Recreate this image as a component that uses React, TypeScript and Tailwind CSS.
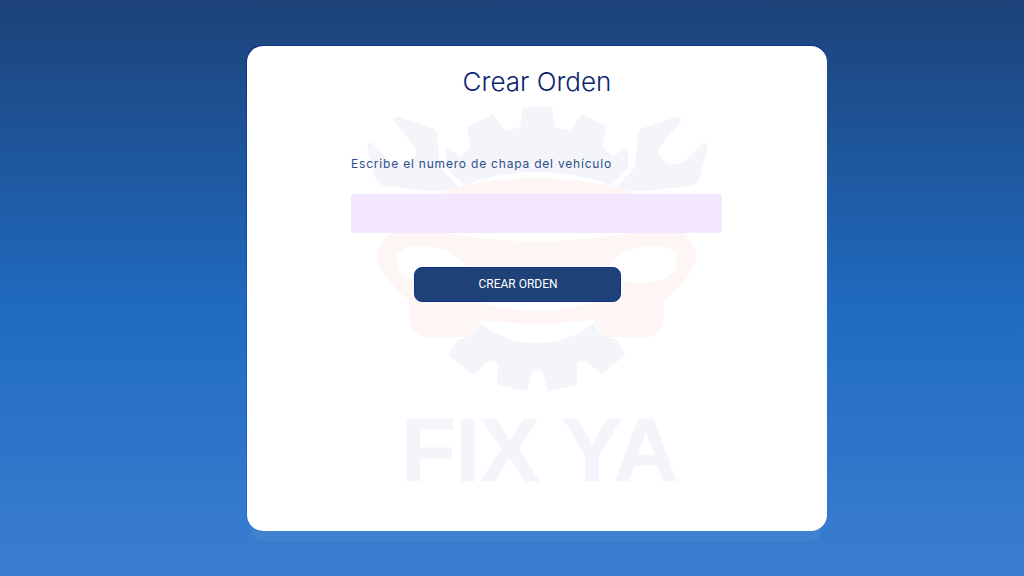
import React from 'react'

function Watermark() {
  // coordenadas de pagina: el viewBox coincide con la tarjeta
  return (
    <svg
      className="absolute inset-0 h-full w-full"
      viewBox="247 46 580 485"
      aria-hidden="true"
    >
      <g fill="#f3f5fa">
        <path d="M446 147 L461 157 L471 147 L467 127 L493 114 L505 131 L520 127 L523 107 L552 107 L555 127 L570 131 L582 114 L607 127 L602 147 L613 156 L628 147 L628 168 L611 185 Q537 159 464 185 L446 168 Z" />
        <path d="M393 120 Q395 116 399 117 L433 128 Q436 130 437 133 L440 167 L460 188 Q440 192 420 190 L385 186 Q378 185 376 180 L367 147 Q368 142 372 143 L387 158 Q396 165 405 164 Q417 160 416 148 Z" />
        <path d="M682 120 Q680 116 676 117 L642 128 Q639 130 638 133 L635 167 L615 188 Q635 192 655 190 L690 186 Q697 185 699 180 L708 147 Q707 142 703 143 L688 158 Q679 165 670 164 Q658 160 659 148 Z" />
        <path d="M480 323 Q505 343 537 343 Q569 343 594 323 Q600 337 617 340 L625 355 L602 374 L584 360 L577 363 L577 385 L548 391 L542 371 L532 371 L527 391 L497 385 L498 363 L490 360 L473 375 L448 355 L458 340 Q474 337 480 323 Z" />
      </g>
      <path
        fill="#fdf6f5"
        fillRule="evenodd"
        d="M445 190 Q537 166 629 190 L684 233 Q696 244 697 256 Q696 266 687 277 Q678 292 664 300 L664 320 Q662 337 645 337 L607 337 Q600 334 594 320 Q537 327 480 320 Q474 334 467 337 L429 337 Q412 337 410 320 L410 300 Q396 292 387 277 Q378 266 377 256 Q378 244 390 233 Z M397 255 Q402 246 420 246 Q447 246 463 262 Q470 270 465 277 Q450 283 430 283 Q405 282 398 268 Z M677 255 Q672 246 654 246 Q627 246 611 262 Q604 270 609 277 Q624 283 644 283 Q669 282 676 268 Z M447 194 L627 194 L627 233 Q537 250 447 233 Z M480 296 L594 296 L594 303 Q537 318 480 303 Z"
      />
    </svg>
  )
}

export default function App() {
  return (
    <div className="h-[576px] w-[1024px] bg-[linear-gradient(180deg,#1c4278_0%,#206cc2_55%,#3b7ed0_100%)] pt-[45px] pl-[246px] [font-family:Inter,sans-serif]">
      <div className="h-[486px] w-[581px] rounded-2xl bg-[linear-gradient(180deg,#0f2f8f,#1f6ed0)] pt-px pl-px shadow-[0_16px_0_-6px_rgba(255,255,255,0.05)]">
        <div className="relative h-[485px] w-[580px] overflow-hidden rounded-2xl bg-white">
          <Watermark />
          <p className="absolute top-[360px] left-[154px] text-[89px] leading-none font-bold text-[#f3f5fa] [-webkit-text-stroke:1px_#f3f5fa] [font-family:'Liberation_Sans',sans-serif]">
            FIX YA
          </p>
          <div className="relative flex flex-col items-center pr-px">
            <h1 className="mt-[19px] ml-px text-[26px] leading-[34px] font-light text-[#0a2470]">
              Crear Orden
            </h1>
            <div className="mt-[55px] flex w-[371px] flex-col">
              <label className="text-xs leading-5 tracking-[0.8px] text-[#2d4f88]">
                Escribe el numero de chapa del vehículo
              </label>
              <input
                type="text"
                className="mt-5 h-[39px] w-full rounded-[3px] bg-[#f3e8fd]"
              />
              <button className="mt-[34px] ml-[63px] h-[35px] w-[207px] rounded-lg border border-[#10308a] bg-[#1e4178] pb-0.5 pl-px text-center text-xs font-[450] text-white [font-family:Roboto,sans-serif]">
                CREAR ORDEN
              </button>
            </div>
          </div>
        </div>
      </div>
    </div>
  )
}
